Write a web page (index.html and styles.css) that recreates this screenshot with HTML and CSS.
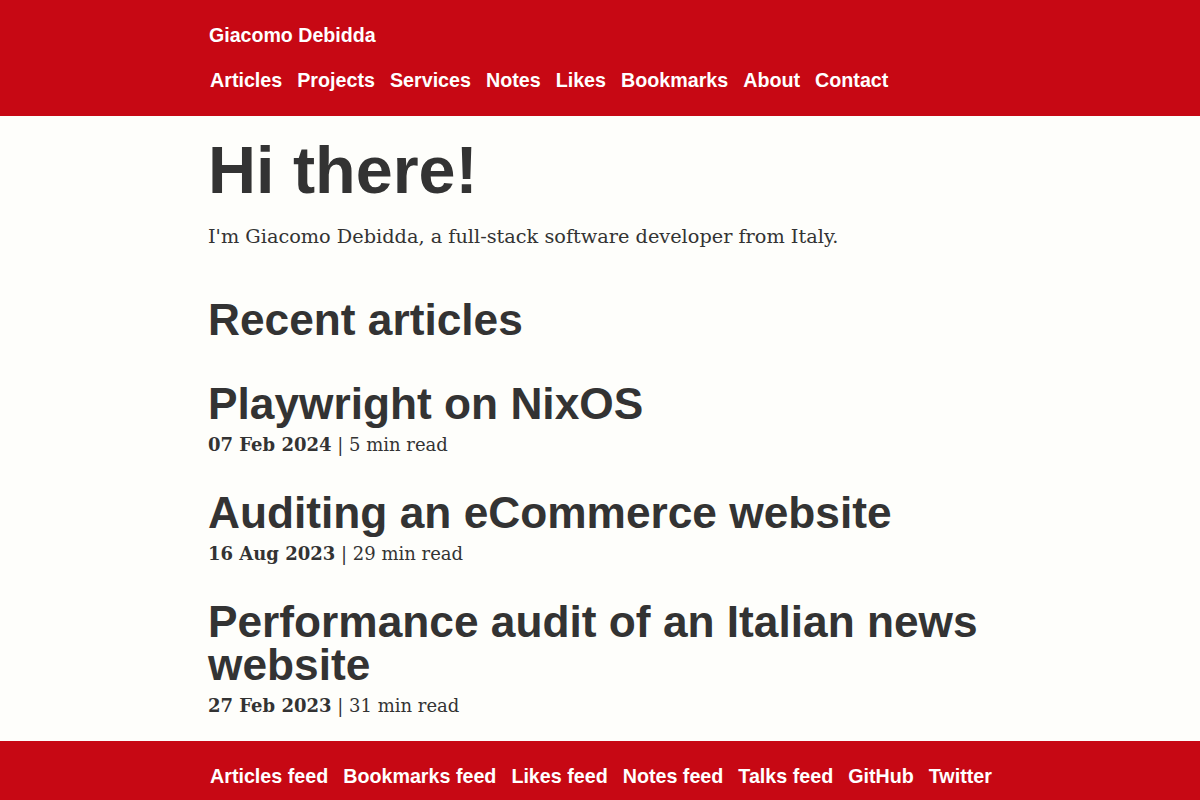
FILE: index.html
```html
<!DOCTYPE html>
<html lang="en">
<head>
    <meta charset="UTF-8">
    <meta name="viewport" content="width=device-width, initial-scale=1.0">
    <title>Giacomo Debidda</title>
    <link rel="stylesheet" href="styles.css">
</head>
<body>
    <!-- Top bar: site name and main navigation -->
    <header class="site-header">
        <div class="wrap">
            <a class="site-title" href="#">Giacomo Debidda</a>
            <nav class="main-nav">
                <a href="#">Articles</a>
                <a href="#">Projects</a>
                <a href="#">Services</a>
                <a href="#">Notes</a>
                <a href="#">Likes</a>
                <a href="#">Bookmarks</a>
                <a href="#">About</a>
                <a href="#">Contact</a>
            </nav>
        </div>
    </header>

    <main class="wrap">
        <h1 class="hello">Hi there!</h1>
        <p class="intro">I'm Giacomo Debidda, a full-stack software developer from Italy.</p>

        <h2 class="section-title">Recent articles</h2>

        <article class="post">
            <h3 class="post-title"><a href="#">Playwright on NixOS</a></h3>
            <p class="post-meta"><strong>07 Feb 2024</strong> | 5 min read</p>
        </article>

        <article class="post">
            <h3 class="post-title"><a href="#">Auditing an eCommerce website</a></h3>
            <p class="post-meta"><strong>16 Aug 2023</strong> | 29 min read</p>
        </article>

        <article class="post">
            <h3 class="post-title"><a href="#">Performance audit of an Italian news website</a></h3>
            <p class="post-meta"><strong>27 Feb 2023</strong> | 31 min read</p>
        </article>
    </main>

    <!-- Footer with feeds and profiles -->
    <footer class="site-footer">
        <div class="wrap">
            <nav class="main-nav">
                <a href="#">Articles feed</a>
                <a href="#">Bookmarks feed</a>
                <a href="#">Likes feed</a>
                <a href="#">Notes feed</a>
                <a href="#">Talks feed</a>
                <a href="#">GitHub</a>
                <a href="#">Twitter</a>
            </nav>
        </div>
    </footer>
</body>
</html>
```

FILE: styles.css
```css
/* General */
body {
    margin: 0;
    padding: 0;
    background-color: #fefefb;
    color: #333;
    font-family: "DejaVu Serif", "Liberation Serif", serif;
    font-size: 18px;
}

a {
    color: inherit;
    text-decoration: none;
}

.wrap {
    max-width: 784px;
    margin: 0 auto;
    padding: 0 8px;
}

/* Header */
.site-header {
    background-color: #c70814;
    color: #fff;
    font-family: "Liberation Sans", Arial, sans-serif;
    font-weight: bold;
    padding: 23px 0 24px;
}

.site-title {
    display: block;
    font-size: 19.6px;
    line-height: 24px;
    padding-left: 1px;
}

.main-nav {
    display: flex;
    flex-wrap: wrap;
    gap: 0 15px;
    padding-left: 2px;
    font-size: 19.7px;
    line-height: 24px;
}

.site-header .main-nav {
    margin-top: 21px;
}

/* Content */
.hello {
    font-family: "Liberation Sans", Arial, sans-serif;
    font-size: 66.5px;
    line-height: 1.1;
    margin: 18px 0 0;
}

.intro {
    margin: 15px 0 0;
    font-size: 19.3px;
    line-height: 30px;
}

.section-title {
    font-family: "Liberation Sans", Arial, sans-serif;
    font-size: 44.25px;
    line-height: 1.1;
    margin: 44px 0 0;
}

.post {
    margin-top: 31px;
}

.section-title + .post {
    margin-top: 37px;
}

.post-title {
    font-family: "Liberation Sans", Arial, sans-serif;
    font-size: 44.25px;
    line-height: 43px;
    margin: 0;
}

.post-meta {
    margin: 5px 0 0;
    line-height: 30px;
}

/* Footer */
.site-footer {
    background-color: #c70814;
    color: #fff;
    font-family: "Liberation Sans", Arial, sans-serif;
    font-weight: bold;
    margin-top: 20px;
    padding: 23px 0 40px;
}
```
